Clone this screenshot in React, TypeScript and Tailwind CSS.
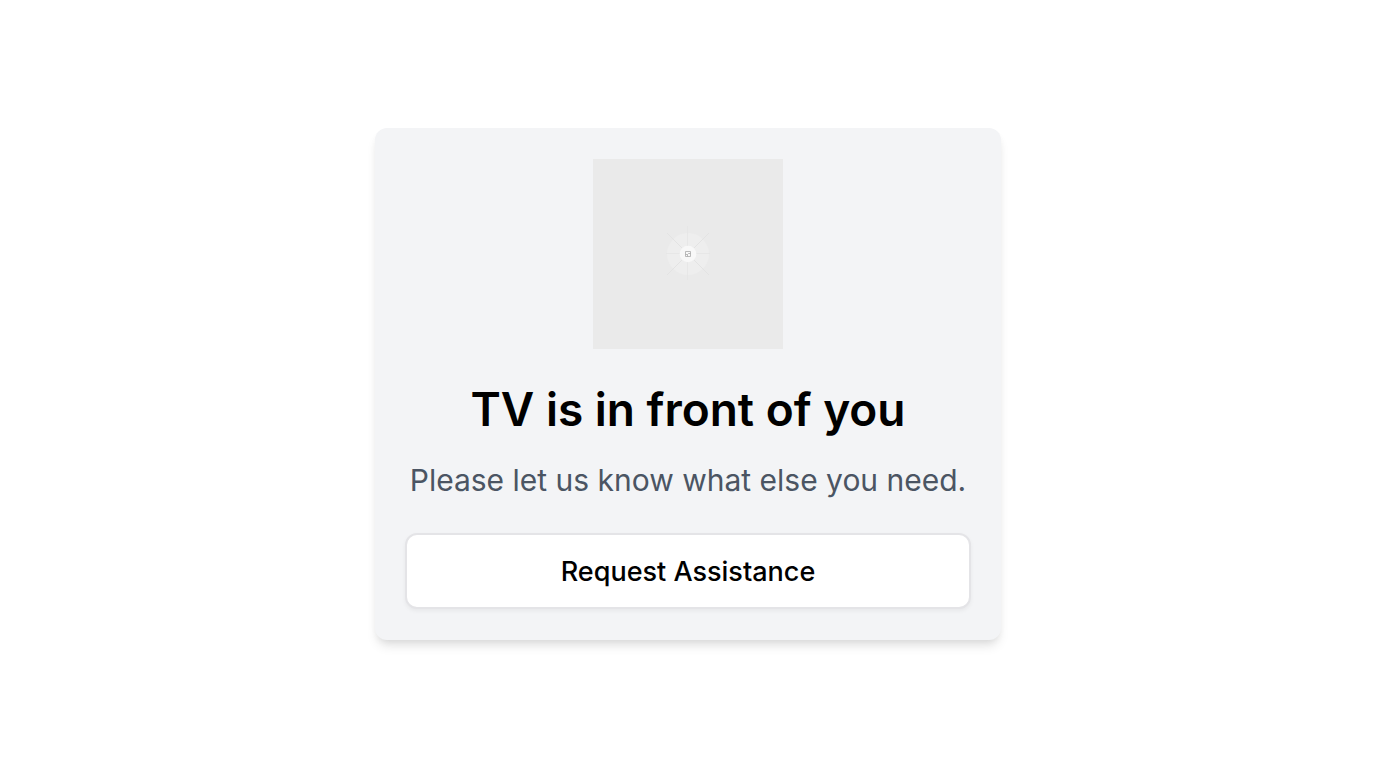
export default function App() {
  return (
    <main className="flex min-h-screen items-center justify-center bg-white font-['Inter',sans-serif]">
      <section className="flex w-full max-w-[626px] flex-col items-center rounded-xl bg-[#f3f4f6] px-[30px] py-[31px] text-center shadow-[0_8px_11px_-2px_rgba(0,0,0,0.1),0_4px_8px_-4px_rgba(0,0,0,0.1)]">
        <svg role="img" aria-label="Placeholder" className="size-[190px] bg-[#eaeaea]" viewBox="0 0 190 190" fill="none">
          <circle cx="95" cy="95" r="21" fill="#eeeeee" />
          <path d="M94.5 67V121M73 94.5H117" stroke="#e5e5e5" strokeWidth="0.9" />
          <path d="M74 74L116 116M116 74L74 116" stroke="#e3e3e3" />
          <circle cx="95" cy="95" r="8.3" fill="#f8f8f8" />
          <path d="M92.5 92.5H97.5V97.5H92.5ZM92.5 95.5H94.5L95.5 94.5H97.5M94.5 95.5V97.5" stroke="#aaaaaa" strokeWidth="0.8" />
        </svg>
        <h1 className="mt-8 text-[46px] leading-[56px] font-semibold text-black">TV is in front of you</h1>
        <p className="mt-5 text-[30px] leading-[46px] text-[#4b5563]">Please let us know what else you need.</p>
        <button type="button" className="mt-[30px] w-full rounded-xl border-2 border-[#e4e4e7] bg-white pt-[17px] pb-[15px] text-[27px] leading-10 font-medium text-black shadow-[0_2px_4px_rgba(0,0,0,0.05)]">
          Request Assistance
        </button>
      </section>
    </main>
  );
}
